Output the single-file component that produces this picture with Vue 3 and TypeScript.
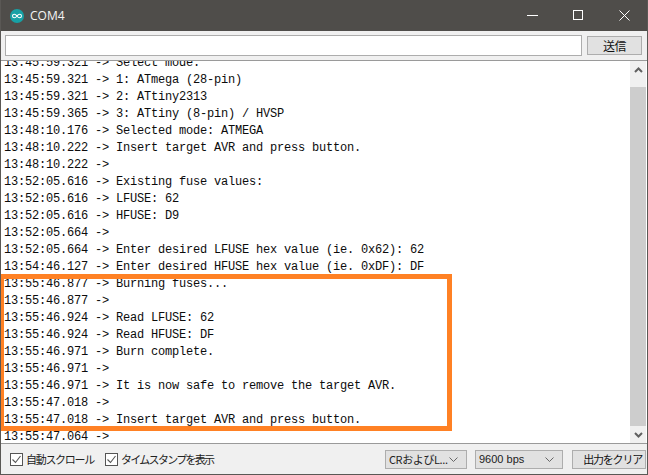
<script setup lang="ts">
const lines: string[] = [
  '13:45:59.321 -> Select mode:',
  '13:45:59.321 -> 1: ATmega (28-pin)',
  '13:45:59.321 -> 2: ATtiny2313',
  '13:45:59.365 -> 3: ATtiny (8-pin) / HVSP',
  '13:48:10.176 -> Selected mode: ATMEGA',
  '13:48:10.222 -> Insert target AVR and press button.',
  '13:48:10.222 -> ',
  '13:52:05.616 -> Existing fuse values:',
  '13:52:05.616 -> LFUSE: 62',
  '13:52:05.616 -> HFUSE: D9',
  '13:52:05.664 -> ',
  '13:52:05.664 -> Enter desired LFUSE hex value (ie. 0x62): 62',
  '13:54:46.127 -> Enter desired HFUSE hex value (ie. 0xDF): DF',
  '13:55:46.877 -> Burning fuses...',
  '13:55:46.877 -> ',
  '13:55:46.924 -> Read LFUSE: 62',
  '13:55:46.924 -> Read HFUSE: DF',
  '13:55:46.971 -> Burn complete.',
  '13:55:46.971 -> ',
  '13:55:46.971 -> It is now safe to remove the target AVR.',
  '13:55:47.018 -> ',
  '13:55:47.018 -> Insert target AVR and press button.',
  '13:55:47.064 -> ',
]
</script>

<template>
  <div class="window">
    <header class="titlebar">
      <div class="title-left">
        <svg class="logo" width="14" height="14" viewBox="0 0 16 16">
          <circle cx="8" cy="8" r="8" fill="#17a1a5" />
          <path d="M8 8C6.8 6.2 5.9 5.9 5 5.9A2.1 2.1 0 0 0 5 10.1C5.9 10.1 6.8 9.8 8 8C9.2 6.2 10.1 5.9 11 5.9A2.1 2.1 0 0 1 11 10.1C10.1 10.1 9.2 9.8 8 8Z" fill="none" stroke="#fff" stroke-width="1.2" />
        </svg>
        <span class="title">COM4</span>
      </div>
      <div class="controls">
        <span class="ctl"><svg width="11" height="11" viewBox="0 0 11 11"><path d="M0 5.5H11" stroke="#fff" fill="none" /></svg></span>
        <span class="ctl"><svg width="10" height="10" viewBox="0 0 10 10"><rect x=".5" y=".5" width="9" height="9" stroke="#fff" fill="none" /></svg></span>
        <span class="ctl"><svg width="11" height="11" viewBox="0 0 11 11"><path d="M.5 .5L10.5 10.5M10.5 .5L.5 10.5" stroke="#fff" fill="none" /></svg></span>
      </div>
    </header>

    <div class="sendrow">
      <input class="input" type="text" />
      <button class="btn send" type="button">送信</button>
    </div>

    <div class="output">
      <div class="log">
        <div class="log-inner">
          <div v-for="(line, i) in lines" :key="i" class="line">{{ line }}</div>
        </div>
      </div>
      <div class="scrollbar">
        <div class="sb-btn"><svg width="9" height="6" viewBox="0 0 9 6"><path d="M1 5L4.5 1.5L8 5" fill="none" stroke="#606060" stroke-width="2" /></svg></div>
        <div class="track"><div class="thumb"></div></div>
        <div class="sb-btn"><svg width="9" height="6" viewBox="0 0 9 6"><path d="M1 1L4.5 4.5L8 1" fill="none" stroke="#606060" stroke-width="2" /></svg></div>
      </div>
      <div class="highlight"></div>
    </div>

    <footer class="footer">
      <label class="check">
        <span class="box"><svg width="11" height="11" viewBox="0 0 11 11"><path d="M1.5 5.5L4.5 8.5L9.5 2" fill="none" stroke="#555" stroke-width="1.1" /></svg></span>
        <span class="check-text">自動スクロール</span>
      </label>
      <label class="check second">
        <span class="box"><svg width="11" height="11" viewBox="0 0 11 11"><path d="M1.5 5.5L4.5 8.5L9.5 2" fill="none" stroke="#555" stroke-width="1.1" /></svg></span>
        <span class="check-text tight">タイムスタンプを表示</span>
      </label>
      <div class="spacer"></div>
      <div class="select s1"><span>CRおよびL...</span><svg width="9" height="5" viewBox="0 0 9 5"><path d="M.5 .5L4.5 4.5L8.5 .5" fill="none" stroke="#666" /></svg></div>
      <div class="select s2"><span>9600 bps</span><svg width="9" height="5" viewBox="0 0 9 5"><path d="M.5 .5L4.5 4.5L8.5 .5" fill="none" stroke="#666" /></svg></div>
      <button class="btn clear" type="button">出力をクリア</button>
    </footer>
  </div>
</template>

<style>
html, body { margin: 0; background: #f0f0f0; }
</style>

<style scoped>
.window {
  width: 648px;
  height: 475px;
  box-sizing: border-box;
  display: flex;
  flex-direction: column;
  overflow: hidden;
  background: #f0f0f0;
  border-left: 1px solid #5a5855;
  border-right: 1px solid #5a5855;
  border-bottom: 1px solid #5a5855;
  font-family: "Noto Sans CJK JP", "Liberation Sans", sans-serif;
  color: #222;
}
.titlebar {
  height: 31px;
  flex: none;
  display: flex;
  align-items: center;
  justify-content: space-between;
  background: #4f4d4a;
  color: #f4f4f4;
  margin: 0 -1px;
  padding-right: 1px;
}
.title-left { display: flex; align-items: center; gap: 6px; padding-left: 10px; }
.logo { display: block; }
.title { font: 12px "Open Sans", sans-serif; }
.controls { display: flex; }
.ctl { width: 46px; height: 30px; display: flex; align-items: center; justify-content: center; margin-bottom: 1px; }
.sendrow {
  height: 29px;
  flex: none;
  display: flex;
  align-items: center;
  gap: 5px;
  padding: 0 5px 0 4px;
  box-sizing: border-box;
}
.input {
  flex: 1;
  min-width: 0;
  height: 21px;
  box-sizing: border-box;
  border: 1px solid #adadad;
  background: #fff;
  outline: none;
  padding: 0;
  margin: 0;
}
.btn {
  box-sizing: border-box;
  border: 1px solid #adadad;
  background: #e1e1e1;
  color: #111;
  font: 12px "Noto Sans CJK JP", sans-serif;
  padding: 0;
  margin: 0;
}
.send { width: 55px; height: 19px; line-height: 17px; letter-spacing: -.5px; }
.output {
  position: relative;
  flex: 1;
  min-height: 0;
  display: flex;
  border-top: 1px solid #9a9a9a;
  border-bottom: 1px solid #9a9a9a;
  background: #fff;
}
.log { flex: 1; min-width: 0; overflow: hidden; }
.log-inner { margin-top: -6px; padding-left: 3px; }
.line {
  height: 17px;
  font: 12px/17px "Liberation Mono", monospace;
  letter-spacing: -.2px;
  white-space: pre;
  color: #0c0c0c;
}
.scrollbar {
  width: 16px;
  flex: none;
  margin-right: 1px;
  background: #f0f0f0;
  display: flex;
  flex-direction: column;
}
.sb-btn { height: 17px; flex: none; display: flex; align-items: center; justify-content: center; }
.track { flex: 1; min-height: 0; padding-top: 9px; display: flex; }
.thumb { flex: 1; background: #cdcdcd; }
.highlight {
  position: absolute;
  left: -1px;
  top: 213px;
  width: 443px;
  height: 147px;
  border: 5px solid #ff8124;
  border-left-width: 4px;
}
.footer {
  height: 30px;
  flex: none;
  display: flex;
  align-items: center;
  padding: 0 1px 0 9px;
  font-size: 11px;
  color: #222;
}
.check { display: flex; align-items: center; gap: 3px; white-space: nowrap; }
.check-text { letter-spacing: -1.3px; }
.tight { letter-spacing: -1.7px; }
.second { margin-left: 11px; }
.box {
  width: 13px;
  height: 13px;
  box-sizing: border-box;
  border: 1px solid #555;
  background: #fff;
  display: flex;
  align-items: center;
  justify-content: center;
}
.spacer { flex: 1; }
.select {
  height: 19px;
  box-sizing: border-box;
  border: 1px solid #adadad;
  background: #e1e1e1;
  display: flex;
  align-items: center;
  justify-content: space-between;
  padding: 0 8px 0 3px;
  white-space: nowrap;
}
.s1 { width: 82px; margin-right: 8px; letter-spacing: -.4px; }
.s2 { width: 88px; margin-right: 9px; font-family: "Liberation Sans", sans-serif; }
.clear { width: 74px; height: 19px; font-size: 11px; line-height: 17px; text-align: right; padding-right: 3px; letter-spacing: -1.2px; }
</style>
